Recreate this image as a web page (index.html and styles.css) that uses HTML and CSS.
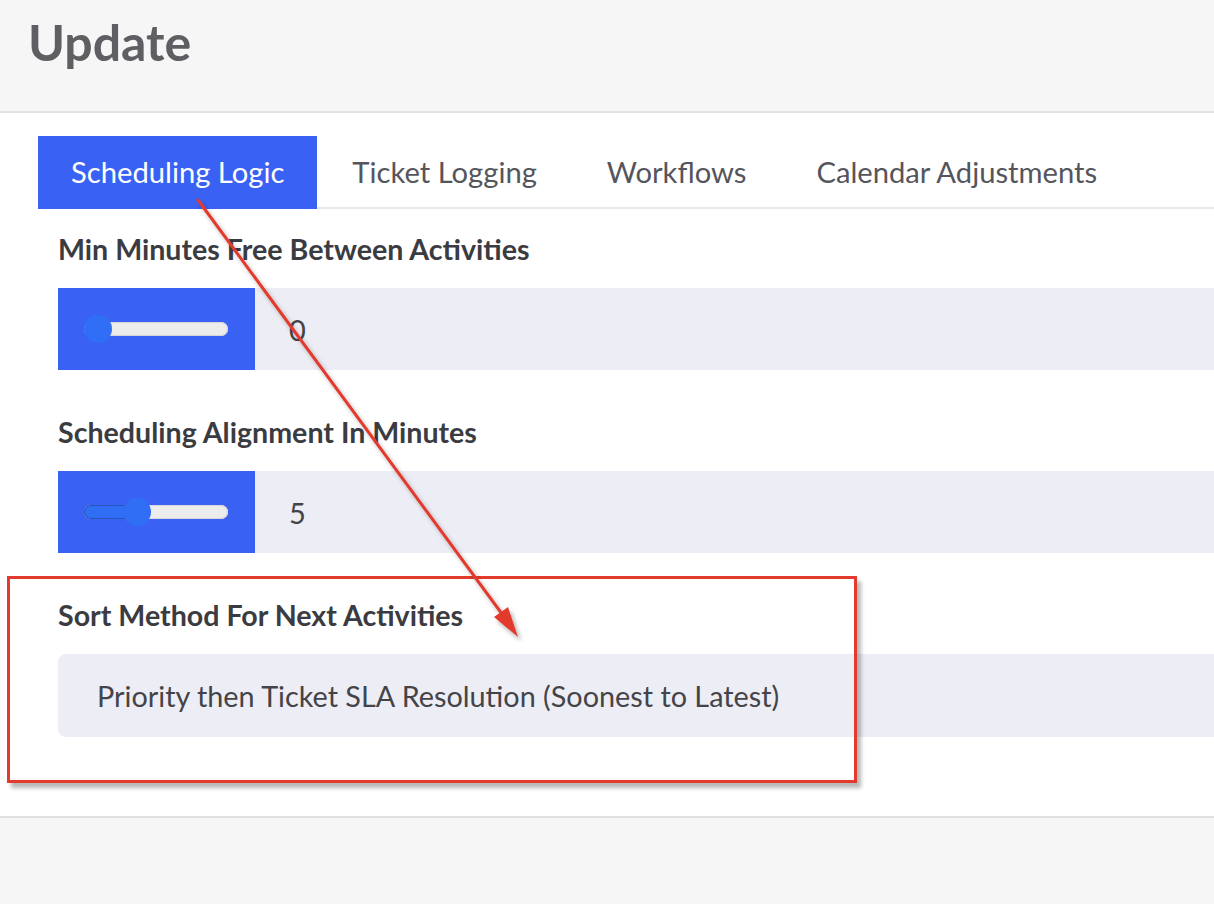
FILE: index.html
```html
<!DOCTYPE html>
<html lang="en">
<head>
<meta charset="utf-8">
<title>Update</title>
<link rel="stylesheet" href="styles.css">
</head>
<body>
<header class="page-header">
  <h1 class="page-title">Update</h1>
</header>
<main class="panel">
  <nav class="tabs">
    <div class="tab active">Scheduling Logic</div>
    <div class="tab">Ticket Logging</div>
    <div class="tab">Workflows</div>
    <div class="tab">Calendar Adjustments</div>
  </nav>
  <section class="fields">
    <div class="field">
      <div class="label">Min Minutes Free Between Activities</div>
      <div class="range-row">
        <div class="range-box">
          <div class="track"><div class="fill" style="width:0px"></div><div class="thumb" style="left:0px"></div></div>
        </div>
        <div class="range-value">0</div>
      </div>
    </div>
    <div class="field">
      <div class="label">Scheduling Alignment In Minutes</div>
      <div class="range-row">
        <div class="range-box">
          <div class="track"><div class="fill" style="width:53px"></div><div class="thumb" style="left:39px"></div></div>
        </div>
        <div class="range-value">5</div>
      </div>
    </div>
    <div class="field">
      <div class="label">Sort Method For Next Activities</div>
      <div class="select">Priority then Ticket SLA Resolution (Soonest to Latest)</div>
    </div>
  </section>
</main>
<div class="annot-box"></div>
<svg class="annot-arrow" width="1214" height="904" viewBox="0 0 1214 904" xmlns="http://www.w3.org/2000/svg">
  <defs>
    <filter id="sh" x="-10%" y="-10%" width="130%" height="130%">
      <feDropShadow dx="3" dy="4" stdDeviation="2" flood-color="#000" flood-opacity="0.3"/>
    </filter>
  </defs>
  <g filter="url(#sh)">
    <line x1="198" y1="200" x2="505" y2="618" stroke="#e23b2e" stroke-width="3" stroke-linecap="round"/>
    <polygon points="518,637 494,617 508,607" fill="#e23b2e"/>
  </g>
</svg>
</body>
</html>
```
FILE: styles.css
```css
html, body {
  margin: 0;
  padding: 0;
}
body {
  background: #f6f6f6;
  font-family: Lato, "Noto Sans", "Liberation Sans", sans-serif;
  color: #3f3f46;
  width: 1214px;
  height: 904px;
  overflow: hidden;
  position: relative;
}
.page-header {
  padding-left: 28px;
  border-bottom: 2px solid #e1e1e1;
  box-sizing: border-box;
  height: 113px;
}
.page-title {
  margin: 0;
  padding-top: 12px;
  font-size: 50px;
  line-height: 60px;
  font-weight: 700;
  color: #5f5f63;
}
.panel {
  background: #ffffff;
  padding-top: 23px;
  padding-bottom: 79px;
  border-bottom: 2px solid #e1e1e1;
}
.tabs {
  display: flex;
  margin-left: 38px;
  border-bottom: 2px solid #e8e8ef;
  height: 73px;
  box-sizing: border-box;
}
.tab {
  padding: 0 35px 2px;
  height: 73px;
  display: flex;
  align-items: center;
  font-size: 29.2px;
  color: #55555c;
  box-sizing: border-box;
}
.tab.active {
  background: #3962f5;
  color: #ffffff;
  padding: 0 33px 2px 33px;
}
.fields {
  margin-left: 58px;
  padding-top: 24px;
}
.field {
  margin-bottom: 46px;
}
.field:last-child {
  margin-bottom: 0;
}
.label {
  font-size: 28.6px;
  line-height: 32px;
  font-weight: 700;
  color: #3b3b42;
  margin-bottom: 23px;
}
.range-row {
  display: flex;
  align-items: center;
  height: 82px;
  background: #ededf5;
}
.range-box {
  width: 197px;
  height: 82px;
  background: #3962f5;
  display: flex;
  align-items: center;
  padding-left: 26px;
  box-sizing: border-box;
}
.track {
  position: relative;
  width: 144px;
  height: 14px;
  border-radius: 7px;
  background: #ececec;
  box-shadow: inset 0 0 0 1px #d5d5d8;
}
.fill {
  height: 14px;
  border-radius: 7px;
  background: #2f6ef5;
  box-shadow: inset 0 0 0 1px #2a55b8;
}
.thumb {
  position: absolute;
  top: -7px;
  width: 28px;
  height: 28px;
  border-radius: 50%;
  background: #2f6ef5;
}
.range-value {
  padding-left: 34px;
  font-size: 29px;
  color: #444448;
}
.select {
  height: 83px;
  background: #ededf5;
  border-radius: 8px 0 0 8px;
  display: flex;
  align-items: center;
  padding-left: 39px;
  font-size: 28.8px;
  color: #444448;
}
.annot-box {
  position: absolute;
  left: 7px;
  top: 576px;
  width: 850px;
  height: 207px;
  box-sizing: border-box;
  border: 3px solid #e23b2e;
  box-shadow: 4px 5px 4px rgba(0, 0, 0, 0.28);
}
.annot-arrow {
  position: absolute;
  left: 0;
  top: 0;
  pointer-events: none;
}
```
